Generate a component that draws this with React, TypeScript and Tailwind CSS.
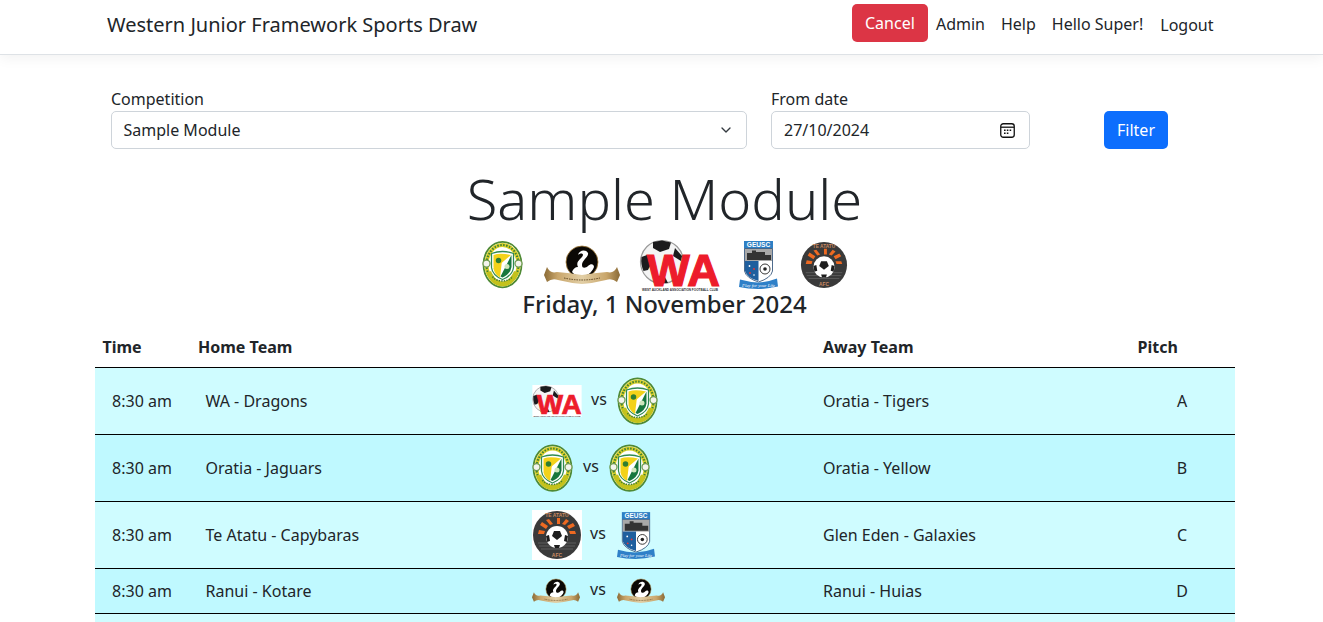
import { ChevronDown } from 'lucide-react'

type LogoProps = { w: number; h: number; bg?: boolean }

function Oratia({ w, h }: LogoProps) {
  return (
    <svg width={w} height={h} viewBox="0 0 82 96" className="block shrink-0">
      <ellipse cx="41" cy="48" rx="38" ry="45.5" fill="#fff" stroke="#4f8a35" strokeWidth="3.5" />
      <ellipse cx="41" cy="48" rx="32" ry="39" fill="none" stroke="#d8d02a" strokeWidth="8" />
      <ellipse cx="41" cy="48" rx="32" ry="39" fill="none" stroke="#3f7d34" strokeWidth="4" strokeDasharray="3 3" />
      <path d="M9 64 C14 82 28 92 41 92 C54 92 68 82 73 64 L64 61 C58 75 50 82 41 82 C32 82 24 75 18 61 Z" fill="#c4c21c" />
      <path d="M21 72 C28 84 54 84 61 72" fill="none" stroke="#47802f" strokeWidth="3" strokeDasharray="3 2" />
      <circle cx="9" cy="46" r="7" fill="#f4f4ee" stroke="#6f9a50" strokeWidth="2.5" />
      <circle cx="73" cy="46" r="7" fill="#f4f4ee" stroke="#6f9a50" strokeWidth="2.5" />
      <path d="M19 26 Q41 18 63 26 L63 54 Q61 70 41 78 Q21 70 19 54 Z" fill="#fff" stroke="#2f8a52" strokeWidth="2.5" />
      <path d="M23 29 Q36 24 58 29 L24 58 Q23 56 23 52 Z" fill="#f3d21a" />
      <path d="M23 56 L40 40 L36 74 Q25 68 23 56 Z" fill="#f3d21a" />
      <path d="M59 29 L59 53 Q57 67 41 74 L37 72 Z" fill="#17773d" />
      <circle cx="33" cy="40" r="5.5" fill="#2e7d32" />
      <circle cx="50" cy="52" r="5" fill="#cfe6bd" />
    </svg>
  )
}

function Swan({ w, h }: LogoProps) {
  return (
    <svg width={w} height={h} viewBox="0 0 76 40" className="block shrink-0">
      <defs>
        <linearGradient id="ribbon" x1="0" x2="1" y1="0" y2="0">
          <stop offset="0" stopColor="#8a6a35" />
          <stop offset="0.18" stopColor="#c9a66b" />
          <stop offset="0.5" stopColor="#e2cfa6" />
          <stop offset="0.82" stopColor="#c9a66b" />
          <stop offset="1" stopColor="#8a6a35" />
        </linearGradient>
      </defs>
      <circle cx="38" cy="17" r="16" fill="#0b0805" stroke="#a8803c" strokeWidth="0.8" />
      <path d="M28 27 C33 33 46 33 50 22 C50 19 47 18 44 21 C42 23 38 24 38 20 C38 15 45 12 44 8 C42 4 35 5 34 10 C36 8 39 8 39 10 C38 14 31 16 34 22 C31 22 29 24 28 27 Z" fill="#fff" />
      <path d="M0 30 L3 22 Q6 29 13 27 Q26 28 38 30 Q50 28 63 27 Q70 29 73 22 L76 30 L73 37 Q68 33 62 35 Q50 38 38 39 Q26 38 14 35 Q8 33 3 37 Z" fill="url(#ribbon)" />
      <path d="M20 33 Q38 37 56 33" fill="none" stroke="#5e4520" strokeWidth="1" strokeDasharray="1.5 1" />
    </svg>
  )
}

function WestAuckland({ w, h, bg }: LogoProps) {
  return (
    <svg width={w} height={h} viewBox="0 0 80 52" className="block shrink-0 overflow-visible">
      {bg && <rect width="80" height="52" fill="#fff" />}
      <circle cx="22" cy="23" r="21.5" fill="#f4f4f4" stroke="#9a9a9a" strokeWidth="1.2" />
      <path d="M13 3 L22 1.5 L31 3.5 L29 10 L20 13 L13 9 Z" fill="#1b1b1d" />
      <path d="M1.5 18 L7 16 L12 23 L8 31 L3.5 32 Q0.5 25 1.5 18 Z" fill="#1b1b1d" />
      <path d="M35 9 L42 17 L41 22 L33 17 Z" fill="#1b1b1d" />
      <path d="M15 38 L24 36 L28 44 L18 44 Z" fill="#1b1b1d" />
      <text x="7" y="47" textLength="73" lengthAdjust="spacingAndGlyphs" fontFamily="'Liberation Sans', sans-serif" fontWeight="700" fontSize="44" fill="#ed1c2b" stroke="#ed1c2b" strokeWidth="1.2">WA</text>
      <text x="2" y="51.5" textLength="76" lengthAdjust="spacingAndGlyphs" fontFamily="'Liberation Sans', sans-serif" fontWeight="700" fontSize="3.2" fill="#333">WEST AUCKLAND ASSOCIATION FOOTBALL CLUB</text>
    </svg>
  )
}

function Geusc({ w, h }: LogoProps) {
  return (
    <svg width={w} height={h} viewBox="0 0 39 48" className="block shrink-0 overflow-visible">
      <rect x="5" y="0" width="29" height="7.5" fill="#2e7fc4" />
      <text x="19.5" y="6.3" textAnchor="middle" fontFamily="'Liberation Sans', sans-serif" fontWeight="700" fontSize="6.6" fill="#fff">GEUSC</text>
      <path d="M5.5 7.5 H33.5 V30 Q32 37 19.5 41 Q7 37 5.5 30 Z" fill="#fff" stroke="#22456f" strokeWidth="0.8" />
      <rect x="6" y="8" width="27" height="12" fill="#a8a8a8" />
      <path d="M8 19 V12 H13 V9.5 H17 V11 H26 V14 H32 V19 Z" fill="#333" />
      <path d="M6 20 H19.5 V40 Q8 37 6 30 Z" fill="#1f5f9e" />
      <circle cx="10.5" cy="25" r="0.9" fill="#fff" />
      <circle cx="15" cy="28" r="0.9" fill="#e33" />
      <circle cx="11" cy="32" r="0.9" fill="#e33" />
      <circle cx="15" cy="34" r="0.8" fill="#fff" />
      <circle cx="26" cy="28" r="5" fill="#fff" stroke="#222" strokeWidth="0.9" />
      <circle cx="26" cy="28" r="1.8" fill="#222" />
      <path d="M1 38.5 Q10 41 19 41.5 Q29 41 38 37.5 L39 45.5 Q28 48 19 48 Q9 48 0 46 Z" fill="#2f80c8" />
      <text x="19.5" y="46" textAnchor="middle" fontFamily="'Liberation Serif', serif" fontStyle="italic" fontSize="4.6" fill="#fff">Play for your Life</text>
    </svg>
  )
}

function TeAtatu({ w, h, bg }: LogoProps) {
  return (
    <svg width={w} height={h} viewBox="0 0 50 50" className="block shrink-0">
      {bg && <rect width="50" height="50" fill="#fff" />}
      <circle cx="25" cy="25" r="24" fill="#3a3a3a" />
      <path d="M6 33 H44 M7 36 H43 M9 39 H41" stroke="#5c5c5c" strokeWidth="1" />
      <text x="25" y="7" textAnchor="middle" fontFamily="'Liberation Sans', sans-serif" fontWeight="700" fontSize="5" fill="#c98a62">TE ATATU</text>
      <text x="25" y="46.5" textAnchor="middle" fontFamily="'Liberation Sans', sans-serif" fontWeight="700" fontSize="5" fill="#c98a62">AFC</text>
      <path d="M7 20 L13 21 L12 24 L6 24 Z M10 12 L16 16 L14 19 L8 15 Z M17 9 L21 14 L18 15 L14 10 Z M25 8 L28 8 L28 14 L25 14 Z M34 9 L37 11 L33 15 L30 14 Z M41 13 L43 16 L37 19 L35 16 Z M43 21 L44 24 L38 24 L37 21 Z" fill="#ee6a22" />
      <circle cx="25" cy="27" r="11" fill="#fff" />
      <path d="M22 21 L28 21 L30 26 L25 30 L20 26 Z" fill="#1d1d1d" />
      <path d="M14 26 L17 25 L18 31 L15 32 Z M33 25 L36 26 L35 32 L32 31 Z M22 35 L28 35 L27 38 L23 38 Z" fill="#1d1d1d" />
    </svg>
  )
}

const matches = [
  { home: 'WA - Dragons', away: 'Oratia - Tigers', pitch: 'A', left: <WestAuckland w={50} h={32} bg />, right: <Oratia w={41} h={50} />, gapA: 'ml-[9px]', gapB: 'ml-[10px]', tone: 'bg-[#cffcff]' },
  { home: 'Oratia - Jaguars', away: 'Oratia - Yellow', pitch: 'B', left: <Oratia w={41} h={50} />, right: <Oratia w={41} h={50} />, gapA: 'ml-[10px]', gapB: 'ml-[10px]', tone: 'bg-[#bff9ff]' },
  { home: 'Te Atatu - Capybaras', away: 'Glen Eden - Galaxies', pitch: 'C', left: <TeAtatu w={50} h={50} bg />, right: <Geusc w={38} h={47} />, gapA: 'ml-[8px]', gapB: 'ml-[11px]', tone: 'bg-[#cffcff]' },
  { home: 'Ranui - Kotare', away: 'Ranui - Huias', pitch: 'D', left: <Swan w={48} h={28} />, right: <Swan w={48} h={28} />, gapA: 'ml-[10px]', gapB: 'ml-[11px]', tone: 'bg-[#bff9ff]' },
]

export default function App() {
  return (
    <div className="h-screen overflow-hidden bg-white font-['Noto_Sans',sans-serif] text-base text-[#212529]">
      <nav className="h-[55px] border-b border-[#dee2e6] shadow-[0_4px_12px_rgba(0,0,0,0.05)]">
        <div className="ml-[95px] flex h-12 w-[1140px] items-center justify-between pl-3 pr-[21.5px]">
          <span className="mt-[2px] text-xl">Western Junior Framework Sports Draw</span>
          <div className="flex items-center">
            <button className="mb-[2px] h-[38px] w-[76px] rounded-[5px] bg-[#dc3545] text-white">Cancel</button>
            <a className="ml-2">Admin</a>
            <a className="ml-4">Help</a>
            <a className="ml-4">Hello Super!</a>
            <a className="ml-[17px] mt-[2px]">Logout</a>
          </div>
        </div>
      </nav>

      <main className="ml-[95px] w-[1140px]">
        <form className="flex items-end pl-4 pt-8">
          <div className="w-[636px]">
            <label className="block h-6 leading-6">Competition</label>
            <div className="flex h-[38px] items-center justify-between rounded-[5px] border border-[#ced4da] pl-[11.5px] pr-3">
              <span>Sample Module</span>
              <ChevronDown className="h-4 w-4 text-[#343a40]" strokeWidth={2} />
            </div>
          </div>
          <div className="ml-6 w-[259px]">
            <label className="block h-6 leading-6">From date</label>
            <div className="flex h-[38px] items-center justify-between rounded-[5px] border border-[#ced4da] pl-3 pr-[14px]">
              <span>27/10/2024</span>
              <svg width="15" height="15" viewBox="0 0 15 15" className="block">
                <rect x="0.75" y="0.75" width="13.5" height="13.5" rx="2.5" fill="none" stroke="#111" strokeWidth="1.3" />
                <path d="M1 4.2 H14" stroke="#111" strokeWidth="1.3" />
                <path d="M4 6.5h1.6v1.6H4z M6.8 6.5h1.6v1.6H6.8z M9.6 6.5h1.6v1.6H9.6z M4 9.4h1.6v1.6H4z M6.8 9.4h1.6v1.6H6.8z" fill="#111" />
              </svg>
            </div>
          </div>
          <button type="button" className="ml-[74px] h-[38px] w-16 rounded-[5px] bg-[#0d6efd] text-white">Filter</button>
        </form>

        <h1 className="mt-4 pr-px text-center text-[56px] font-light leading-[67px]">Sample Module</h1>

        <div className="mt-[6px] flex h-[53px] items-center justify-center">
          <Oratia w={41} h={49} />
          <div className="ml-[21px]"><Swan w={76} h={40} /></div>
          <div className="ml-5"><WestAuckland w={80} h={52} /></div>
          <div className="ml-[19px]"><Geusc w={39} h={48} /></div>
          <div className="ml-[22px]"><TeAtatu w={48} h={50} /></div>
        </div>

        <h4 className="h-[29px] pr-px text-center text-2xl font-medium leading-[26px]">Friday, 1 November 2024</h4>

        <table className="mt-[7px] w-[1140px] table-fixed border-separate border-spacing-0">
          <colgroup>
            <col className="w-[95px]" />
            <col className="w-[310px]" />
            <col className="w-[315px]" />
            <col className="w-[315px]" />
            <col className="w-[105px]" />
          </colgroup>
          <thead>
            <tr>
              <th className="h-[41px] border-b border-black pl-[7.5px] text-left font-bold">Time</th>
              <th className="border-b border-black pl-2 text-left font-bold">Home Team</th>
              <th className="border-b border-black" />
              <th className="border-b border-black pl-2 text-left font-bold">Away Team</th>
              <th className="border-b border-black pl-[7.5px] text-left font-bold">Pitch</th>
            </tr>
          </thead>
          <tbody>
            {matches.map((m) => (
              <tr key={m.home} className={m.tone}>
                <td className="border-b border-black pr-px text-center">8:30 am</td>
                <td className="border-b border-black pl-[15.5px]">{m.home}</td>
                <td className="border-b border-black py-2 pl-8">
                  <div className="flex items-center">
                    {m.left}
                    <span className={`${m.gapA} mb-[4px] leading-none`}>vs</span>
                    <span className={m.gapB}>{m.right}</span>
                  </div>
                </td>
                <td className="border-b border-black pl-2">{m.away}</td>
                <td className="border-b border-black pr-px text-center">{m.pitch}</td>
              </tr>
            ))}
            <tr className="h-11 bg-[#cffcff]">
              <td colSpan={5} />
            </tr>
          </tbody>
        </table>
      </main>
    </div>
  )
}
